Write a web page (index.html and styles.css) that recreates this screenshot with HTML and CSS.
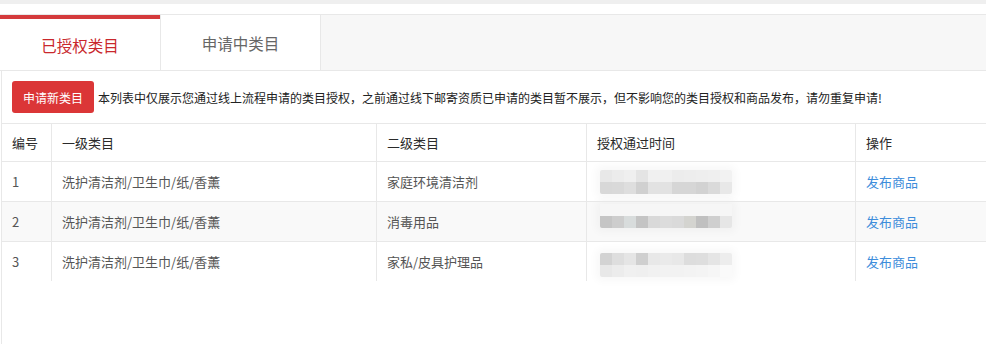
FILE: index.html
```html
<!DOCTYPE html>
<html lang="zh-CN">
<head>
    <meta charset="UTF-8">
    <meta name="viewport" content="width=device-width, initial-scale=1.0">
    <title>类目管理</title>
    <link rel="stylesheet" href="styles.css">
</head>
<body>

    <div class="franja"></div>

    <!-- Pestañas -->
    <div class="pestanas">
        <div class="pestana activa">已授权类目</div>
        <div class="pestana">申请中类目</div>
    </div>

    <div class="panel">
        <div class="aviso">
            <button class="boton">申请新类目</button>
            <span>本列表中仅展示您通过线上流程申请的类目授权，之前通过线下邮寄资质已申请的类目暂不展示，但不影响您的类目授权和商品发布，请勿重复申请!</span>
        </div>

        <table class="tabla">
            <thead>
                <tr>
                    <th class="col-num">编号</th>
                    <th class="col-uno">一级类目</th>
                    <th class="col-dos">二级类目</th>
                    <th class="col-fecha">授权通过时间</th>
                    <th>操作</th>
                </tr>
            </thead>
            <tbody>
                <tr>
                    <td>1</td>
                    <td>洗护清洁剂/卫生巾/纸/香薰</td>
                    <td>家庭环境清洁剂</td>
                    <td><div class="mosaico m1"></div></td>
                    <td><a class="enlace" href="#">发布商品</a></td>
                </tr>
                <tr>
                    <td>2</td>
                    <td>洗护清洁剂/卫生巾/纸/香薰</td>
                    <td>消毒用品</td>
                    <td><div class="mosaico m2"></div></td>
                    <td><a class="enlace" href="#">发布商品</a></td>
                </tr>
                <tr>
                    <td>3</td>
                    <td>洗护清洁剂/卫生巾/纸/香薰</td>
                    <td>家私/皮具护理品</td>
                    <td><div class="mosaico m3"></div></td>
                    <td><a class="enlace" href="#">发布商品</a></td>
                </tr>
            </tbody>
        </table>
    </div>

</body>
</html>
```

FILE: styles.css
```css
body {
    font-family: "Noto Sans CJK SC", "Noto Sans", sans-serif;
    background-color: #fff;
    color: #555;
    margin: 0;
    overflow: hidden;
}

.franja {
    height: 4px;
    background-color: #efefef;
    margin-bottom: 10px;
}

.pestanas {
    display: flex;
    height: 55px;
    background-color: #f7f7f7;
    border-top: 1px solid #e8e8e8;
    border-bottom: 1px solid #e8e8e8;
}

.pestana {
    width: 161px;
    background-color: #fff;
    color: #666;
    font-size: 15.5px;
    display: flex;
    align-items: center;
    justify-content: center;
    border-left: 1px solid #e8e8e8;
    border-right: 1px solid #e8e8e8;
    box-sizing: border-box;
}

.pestana.activa {
    color: #c9282d;
    border: none;
    border-top: 4px solid #d43a3c;
    width: 160px;
}

.panel {
    margin-left: 1px;
    border-left: 1px solid #e8e8e8;
    height: 273px;
}

.aviso {
    display: flex;
    align-items: center;
    gap: 4px;
    padding: 10px;
    font-size: 12px;
    color: #222;
}

.boton {
    width: 82px;
    height: 32px;
    border: none;
    border-radius: 3px;
    background-color: #db3637;
    color: #fff;
    font-family: inherit;
    font-size: 12px;
    padding: 0;
    cursor: pointer;
}

.tabla {
    width: 100%;
    border-collapse: collapse;
    font-size: 13px;
}

.tabla th,
.tabla td {
    text-align: left;
    padding: 0 10px;
    border-top: 1px solid #e8e8e8;
    border-left: 1px solid #e8e8e8;
    height: 39px;
    font-weight: normal;
}

.tabla th:first-child,
.tabla td:first-child {
    border-left: none;
}

.tabla th {
    color: #2a2a2a;
    height: 37px;
}

.tabla tbody tr:nth-child(2) {
    background-color: #f9f9f9;
}

.col-num { width: 29px; }
.col-uno { width: 304px; }
.col-dos { width: 189px; }
.col-fecha { width: 248px; }

.enlace {
    color: #3d8ddb;
    text-decoration: none;
}

/* fecha pixelada */
.mosaico {
    width: 132px;
    height: 24px;
    margin-left: 3px;
    background-repeat: no-repeat;
    background-size: 132px 12px;
    background-position: 0 0, 0 12px;
    box-shadow: 0 0 8px 4px rgba(0, 0, 0, 0.03);
    border-radius: 2px;
}

.m1 {
    background-image:
        linear-gradient(to right, #e8e8e8 0 12px, #ececec 12px 24px, #efefef 24px 36px, #e4e4e4 36px 48px, #f0f0f0 48px 60px, #f0f0f0 60px 72px, #ececec 72px 84px, #ededed 84px 96px, #eeeeee 96px 108px, #efefef 108px 120px, #f2f2f2 120px 132px),
        linear-gradient(to right, #d8d8d8 0 12px, #d9d9d9 12px 24px, #dedede 24px 36px, #d0d0d0 36px 48px, #e2e2e2 48px 60px, #e2e2e2 60px 72px, #d6d6d6 72px 84px, #d6d6d6 84px 96px, #d2d2d2 96px 108px, #dadada 108px 120px, #e8e8e8 120px 132px);
}

.m2 {
    background-image:
        linear-gradient(to right, #f6f6f6 0 132px),
        linear-gradient(to right, #c5c5c5 0 12px, #cdcdcd 12px 24px, #d8dcdc 24px 36px, #c4c4c4 36px 48px, #d9d9d9 48px 60px, #dcdcdc 60px 72px, #dadada 72px 84px, #d4d4d0 84px 96px, #c0c0c0 96px 108px, #cfcfcf 108px 120px, #e6e6e6 120px 132px);
    margin-top: -12px;
}

.m3 {
    background-image:
        linear-gradient(to right, #d3d3d3 0 12px, #dedede 12px 24px, #e5e5e5 24px 36px, #cfcfcf 36px 48px, #e8e8e8 48px 60px, #eaeaea 60px 72px, #e8e8e8 72px 84px, #dddddd 84px 96px, #dedede 96px 108px, #e5e5e5 108px 120px, #ededed 120px 132px),
        linear-gradient(to right, #e8e8e8 0 12px, #ececec 12px 24px, #f0f0f0 24px 36px, #efefef 36px 48px, #f1f1f1 48px 60px, #f2f2f2 60px 72px, #f2f2f2 72px 84px, #f3f3f3 84px 96px, #f4f4f4 96px 108px, #f6f6f6 108px 120px, #fafafa 120px 132px);
    margin-top: 6px;
}
```
